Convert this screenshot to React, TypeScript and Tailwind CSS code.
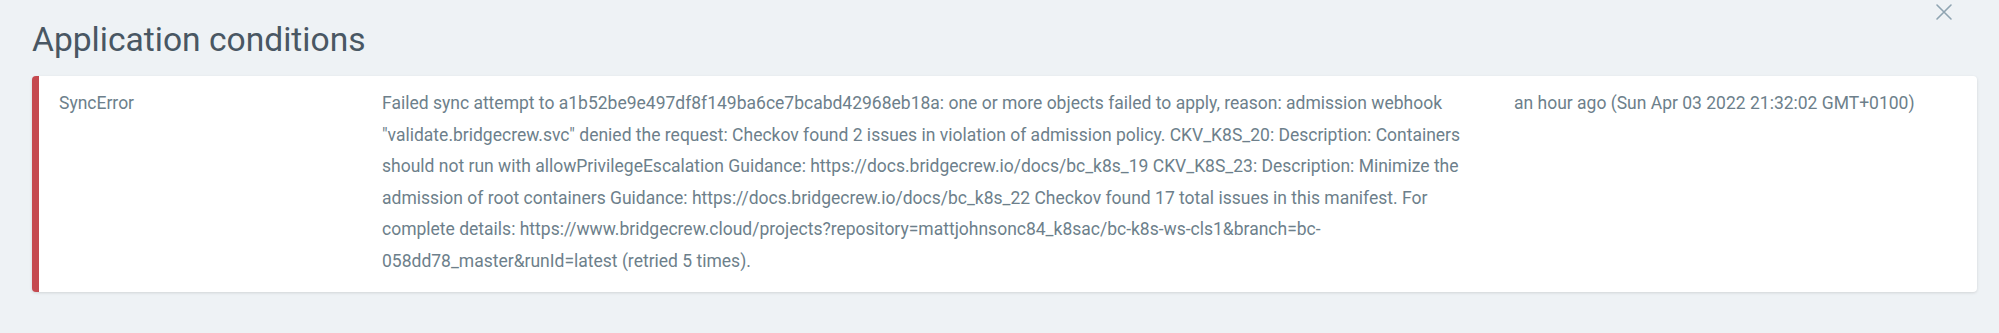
const message =
  'Failed sync attempt to a1b52be9e497df8f149ba6ce7bcabd42968eb18a: one or more objects failed to apply, reason: admission webhook "validate.bridgecrew.svc" denied the request: Checkov found 2 issues in violation of admission policy. CKV_K8S_20: Description: Containers should not run with allowPrivilegeEscalation Guidance: https://docs.bridgecrew.io/docs/bc_k8s_19 CKV_K8S_23: Description: Minimize the admission of root containers Guidance: https://docs.bridgecrew.io/docs/bc_k8s_22 Checkov found 17 total issues in this manifest. For complete details: https://www.bridgecrew.cloud/projects?repository=mattjohnsonc84_k8sac/bc-k8s-ws-cls1&branch=bc-058dd78_master&runId=latest (retried 5 times).';

type Condition = {
  type: string;
  message: string;
  time: string;
};

const conditions: Condition[] = [
  {
    type: "SyncError",
    message,
    time: "an hour ago (Sun Apr 03 2022 21:32:02 GMT+0100)",
  },
];

function CloseIcon() {
  return (
    <svg width="18" height="18" viewBox="0 0 18 18" fill="none" stroke="currentColor" strokeWidth="1.6" strokeLinecap="round">
      <path d="M2 2 L16 16 M16 2 L2 16" />
    </svg>
  );
}

export default function App() {
  return (
    <div className="relative h-[333px] w-full overflow-hidden bg-[#eef2f5] font-['Roboto',sans-serif]">
      <button className="absolute right-[46px] top-[3px] text-[#8fa4b1]">
        <CloseIcon />
      </button>

      <h2 className="pl-[32px] pt-[20px] text-[33.6px] font-normal leading-[40px] text-[#495763]">Application conditions</h2>

      <div className="ml-[32px] mt-[16px] w-[1945px]">
        {conditions.map((condition) => (
          <div
            key={condition.type}
            className="grid grid-cols-[323px_1132px_1fr] rounded-[4px] border-l-[7px] border-[#c5494f] bg-white pb-[15px] pl-[20px] pt-[12px] text-[17.5px] leading-[31.5px] text-[#6d7f8b] shadow-[0_1px_3px_rgba(0,0,0,0.12)]"
          >
            <div>{condition.type}</div>
            <div className="pr-[30px]">{condition.message}</div>
            <div>{condition.time}</div>
          </div>
        ))}
      </div>
    </div>
  );
}
